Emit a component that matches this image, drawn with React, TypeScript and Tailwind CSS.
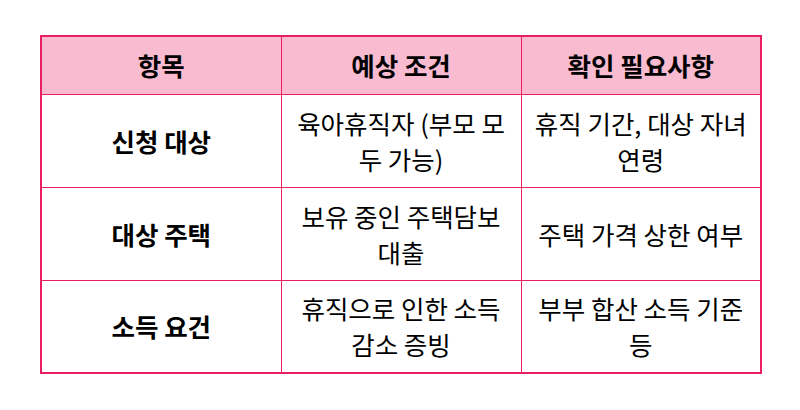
const rows = [
  { item: '신청 대상', cond: '육아휴직자 (부모 모두 가능)', check: '휴직 기간, 대상 자녀 연령' },
  { item: '대상 주택', cond: '보유 중인 주택담보 대출', check: '주택 가격 상한 여부' },
  { item: '소득 요건', cond: '휴직으로 인한 소득 감소 증빙', check: '부부 합산 소득 기준 등' },
];

const App = () => {
  return (
    <div
      className="w-[800px] h-[410px] bg-white pt-[35px] px-[40px]"
      style={{ fontFamily: '"Noto Sans CJK KR", "Noto Sans", sans-serif' }}
    >
      <table className="w-[720px] table-fixed border-collapse border-2 border-[#e91e63] text-[25.5px] leading-[36px] text-black">
        <thead>
          <tr className="bg-[#f8bbd0] h-[58px]">
            <th className="w-[240px] border border-[#e91e63] px-[10px] font-bold text-center">항목</th>
            <th className="w-[240px] border border-[#e91e63] px-[10px] font-bold text-center">예상 조건</th>
            <th className="w-[240px] border border-[#e91e63] px-[10px] font-bold text-center">확인 필요사항</th>
          </tr>
        </thead>
        <tbody>
          {rows.map((r) => (
            <tr key={r.item} className="h-[93px]">
              <td className="border border-[#e91e63] px-[10px] text-center font-bold">{r.item}</td>
              <td className="border border-[#e91e63] px-[10px] text-center">{r.cond}</td>
              <td className="border border-[#e91e63] px-[10px] text-center">{r.check}</td>
            </tr>
          ))}
        </tbody>
      </table>
    </div>
  );
};

export default App;
